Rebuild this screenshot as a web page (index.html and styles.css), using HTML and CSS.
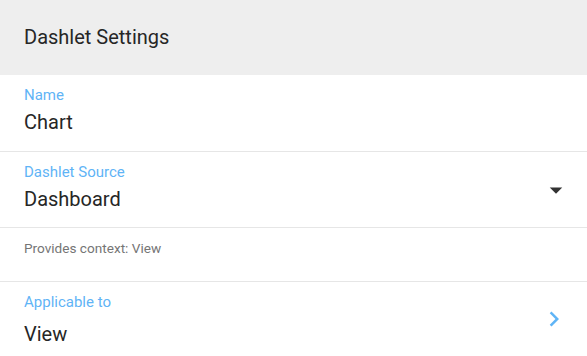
FILE: index.html
```html
<!DOCTYPE html>
<html lang="en">
<head>
  <meta charset="UTF-8">
  <title>Dashlet Settings</title>
  <link rel="stylesheet" href="styles.css">
</head>
<body>
  <div class="header">Dashlet Settings</div>

  <!-- Nome do dashlet -->
  <div class="field">
    <div class="field-body">
      <div class="label">Name</div>
      <div class="value">Chart</div>
    </div>
  </div>

  <!-- Fonte (select) -->
  <div class="field field-select">
    <div class="field-body">
      <div class="label">Dashlet Source</div>
      <div class="value">Dashboard</div>
    </div>
    <svg class="icon" viewBox="0 0 24 24"><path d="M7 10l5 5 5-5z" fill="#333"></path></svg>
  </div>

  <div class="field hint-row">
    <div class="hint">Provides context: View</div>
  </div>

  <!-- Aplicável a -->
  <div class="field last">
    <div class="field-body">
      <div class="label">Applicable to</div>
      <div class="value value-loose">View</div>
    </div>
    <svg class="icon icon-chevron" viewBox="0 0 24 24"><path d="M10 6L8.59 7.41 13.17 12l-4.58 4.59L10 18l6-6z" fill="#5fb4f6"></path></svg>
  </div>
</body>
</html>
```

FILE: styles.css
```css
body {
  font-family: Roboto, "Noto Sans", sans-serif;
  margin: 0;
  background-color: #fff;
  color: #222;
}
.header {
  height: 75px;
  box-sizing: border-box;
  padding: 25px 24px 0;
  background-color: #eeeeee;
  font-size: 20px;
  line-height: 24px;
  color: #262626;
}
.field {
  display: flex;
  align-items: center;
  height: 77px;
  box-sizing: border-box;
  padding: 0 16px 0 24px;
  border-bottom: 1px solid #e6e6e6;
}
.field-select {
  height: 76px;
}
.field-body {
  flex: 1;
  align-self: flex-start;
  padding-top: 11px;
}
.label {
  font-size: 15px;
  line-height: 18px;
  color: #5fb4f6;
}
.value {
  font-size: 20px;
  line-height: 24px;
  margin-top: 6px;
  color: #262626;
}
.value-loose {
  margin-top: 11px;
}
.icon {
  width: 30px;
  height: 30px;
}
.icon-chevron {
  margin-right: 2px;
}
.hint-row {
  height: 54px;
  align-items: flex-start;
}
.hint {
  font-size: 13.6px;
  line-height: 16px;
  padding-top: 12px;
  color: #757575;
}
.field.last {
  height: 74px;
  border-bottom: none;
}
```
